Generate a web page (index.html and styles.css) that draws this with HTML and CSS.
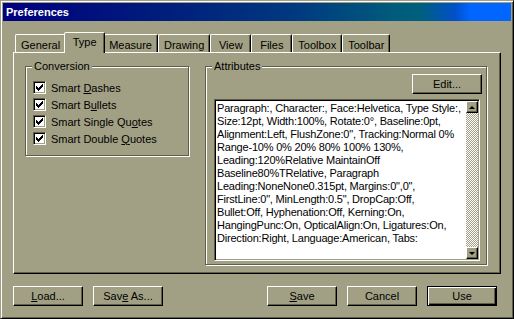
FILE: index.html
```html
<!DOCTYPE html>
<html>
<head>
  <link rel="stylesheet" href="styles.css">
</head>
<body>
  <div class="window">
    <div class="titlebar">Preferences</div>
    <div class="content">
      <div class="tabs">
        <div class="tab">General</div>
        <div class="tab selected">Type</div>
        <div class="tab">Measure</div>
        <div class="tab">Drawing</div>
        <div class="tab">View</div>
        <div class="tab">Files</div>
        <div class="tab">Toolbox</div>
        <div class="tab">Toolbar</div>
      </div>

      <div class="panel">
        <!-- Conversion checkboxes -->
        <div class="group conversion">
          <span class="group-label">Conversion</span>
          <label class="check"><span class="box"><svg width="7" height="7" viewBox="0 0 7 7"><path d="M0 2h1v3H0zM1 3h1v3H1zM2 4h1v3H2zM3 3h1v3H3zM4 2h1v3H4zM5 1h1v3H5zM6 0h1v3H6z"/></svg></span><span>Smart <u>D</u>ashes</span></label>
          <label class="check"><span class="box"><svg width="7" height="7" viewBox="0 0 7 7"><path d="M0 2h1v3H0zM1 3h1v3H1zM2 4h1v3H2zM3 3h1v3H3zM4 2h1v3H4zM5 1h1v3H5zM6 0h1v3H6z"/></svg></span><span>Smart B<u>u</u>llets</span></label>
          <label class="check"><span class="box"><svg width="7" height="7" viewBox="0 0 7 7"><path d="M0 2h1v3H0zM1 3h1v3H1zM2 4h1v3H2zM3 3h1v3H3zM4 2h1v3H4zM5 1h1v3H5zM6 0h1v3H6z"/></svg></span><span>Smart Single Qu<u>o</u>tes</span></label>
          <label class="check"><span class="box"><svg width="7" height="7" viewBox="0 0 7 7"><path d="M0 2h1v3H0zM1 3h1v3H1zM2 4h1v3H2zM3 3h1v3H3zM4 2h1v3H4zM5 1h1v3H5zM6 0h1v3H6z"/></svg></span><span>Smart Double <u>Q</u>uotes</span></label>
        </div>

        <!-- Attributes text -->
        <div class="group attributes">
          <span class="group-label">Attributes</span>
          <div class="edit-row"><button class="btn edit">Edit...</button></div>
          <div class="textbox">
            <div class="text">
              Paragraph:, Character:, Face:Helvetica, Type Style:,<br>
              Size:12pt, Width:100%, Rotate:0°, Baseline:0pt,<br>
              Alignment:Left, FlushZone:0", Tracking:Normal 0%<br>
              Range-10% 0% 20% 80% 100% 130%,<br>
              Leading:120%Relative MaintainOff<br>
              Baseline80%TRelative, Paragraph<br>
              Leading:NoneNone0.315pt, Margins:0",0",<br>
              FirstLine:0", MinLength:0.5", DropCap:Off,<br>
              Bullet:Off, Hyphenation:Off, Kerning:On,<br>
              HangingPunc:On, OpticalAlign:On, Ligatures:On,<br>
              Direction:Right, Language:American, Tabs:
            </div>
            <div class="scrollbar">
              <span class="arrow up"></span>
              <span class="track"></span>
              <span class="arrow down"></span>
            </div>
          </div>
        </div>
      </div>

      <div class="buttons">
        <button class="btn"><u>L</u>oad...</button>
        <button class="btn">Sav<u>e</u> As...</button>
        <span class="spacer"></span>
        <button class="btn"><u>S</u>ave</button>
        <button class="btn">Cancel</button>
        <button class="btn default">Use</button>
      </div>
    </div>
  </div>
</body>
</html>
```

FILE: styles.css
```css
body {
  margin: 0;
  font-family: "Liberation Sans", Arial, sans-serif;
  font-size: 11px;
  color: #000;
  background-color: #a2a084;
}
.window {
  width: 514px;
  height: 319px;
  box-sizing: border-box;
  border: 1px solid;
  border-color: #a2a084 #000 #000 #a2a084;
  box-shadow: inset 1px 1px #fff, inset -1px -1px #5f5e48;
  padding: 2px;
  background-color: #a2a084;
}
.titlebar {
  height: 18px;
  display: flex;
  align-items: center;
  padding-left: 3px;
  color: #fff;
  font-weight: bold;
  background: linear-gradient(90deg, #000080 0%, #001c7c 30%, #003a80 58%, #005a7c 76%, #00607e 82%, #0050c8 89%, #0066ff 92%, #0066ff 100%);
}
.content {
  padding: 11px 10px 0 10px;
}

/* tab strip */
.tabs {
  display: flex;
  align-items: flex-end;
  height: 20px;
  padding-left: 2px;
}
.tab {
  height: 18px;
  min-width: 41px;
  box-sizing: border-box;
  padding: 2px 5px 0;
  border: 1px solid;
  border-bottom: none;
  border-color: #fff #000 transparent #fff;
  border-radius: 2px 2px 0 0;
  box-shadow: inset -1px 0 #5f5e48;
  display: flex;
  align-items: center;
  justify-content: center;
}
.tab.selected {
  height: 21px;
  margin: 0 -2px -1px;
  padding: 0 5px 2px;
  position: relative;
  z-index: 1;
  background-color: #a2a084;
}

.panel {
  height: 222px;
  box-sizing: border-box;
  border: 1px solid;
  border-color: #fff #000 #000 #fff;
  box-shadow: inset -1px -1px #5f5e48;
  padding: 13px 13px 0 11px;
  display: flex;
  align-items: flex-start;
  gap: 16px;
}

/* etched group boxes */
.group {
  position: relative;
  box-sizing: border-box;
  border: 1px solid #5f5e48;
  box-shadow: inset 1px 1px #fff, 1px 1px #fff;
}
.group-label {
  position: absolute;
  top: -7px;
  left: 6px;
  padding: 0 2px;
  line-height: 13px;
  background-color: #a2a084;
}
.conversion {
  width: 164px;
  height: 90px;
  padding: 12px 0 0 7px;
}
.check {
  display: flex;
  align-items: center;
  height: 17px;
}
.box {
  width: 13px;
  height: 13px;
  box-sizing: border-box;
  margin-right: 5px;
  padding: 2px;
  border: 1px solid;
  border-color: #5f5e48 #fff #fff #5f5e48;
  box-shadow: inset 1px 1px #000, inset -1px -1px #a2a084;
  background-color: #fff;
}
.box svg {
  display: block;
}

.attributes {
  width: 282px;
  height: 199px;
  padding: 7px 4px 3px 8px;
  display: flex;
  flex-direction: column;
}
.edit-row {
  display: flex;
  justify-content: flex-end;
}
.textbox {
  flex: 1;
  display: flex;
  margin: 5px 2px 0 0;
  padding: 1px;
  border: 1px solid;
  border-color: #5f5e48 #fff #fff #5f5e48;
  box-shadow: inset 1px 1px #000, inset -1px -1px #a2a084;
  background-color: #fff;
  overflow: hidden;
}
.text {
  flex: 1;
  padding: 1px 0 0 1px;
  line-height: 13px;
  letter-spacing: -0.2px;
  white-space: nowrap;
  overflow: hidden;
}
.scrollbar {
  width: 12px;
  display: flex;
  flex-direction: column;
}
.track {
  flex: 1;
  background-image: conic-gradient(#fff 25%, #a2a084 0 50%, #fff 0 75%, #a2a084 0);
  background-size: 2px 2px;
}
.arrow {
  height: 12px;
  box-sizing: border-box;
  border: 1px solid;
  border-color: #fff #000 #000 #fff;
  box-shadow: inset -1px -1px #5f5e48;
  background-color: #a2a084;
  display: flex;
  align-items: center;
  justify-content: center;
}
.arrow::after {
  content: "";
  border-left: 3px solid transparent;
  border-right: 3px solid transparent;
}
.arrow.up::after {
  border-bottom: 3px solid #000;
}
.arrow.down::after {
  border-top: 3px solid #000;
}

/* buttons */
.btn {
  width: 70px;
  height: 20px;
  box-sizing: border-box;
  padding: 0;
  font-family: "Liberation Sans", Arial, sans-serif;
  font-size: 11px;
  color: #000;
  background-color: #a2a084;
  border: 1px solid;
  border-color: #fff #000 #000 #fff;
  box-shadow: inset -1px -1px #5f5e48;
}
.btn.default {
  border-color: #000;
  box-shadow: inset 1px 1px #fff, inset -1px -1px #000, inset -2px -2px #5f5e48;
}
.buttons {
  display: flex;
  gap: 10px;
  margin-top: 12px;
  padding-right: 4px;
}
.spacer {
  flex: 1;
}
```
